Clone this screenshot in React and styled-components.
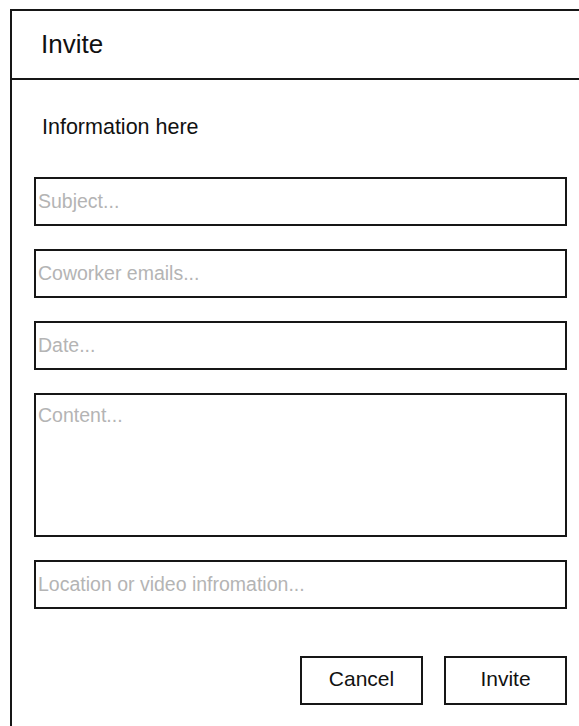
import React from 'react'
import styled, { createGlobalStyle } from 'styled-components'

const GlobalStyle = createGlobalStyle`
    html, body {
        margin: 0;
        padding: 0;
        background: #ffffff;
        overflow: hidden;
    }

    body {
        font-family: "Liberation Sans", Arial, sans-serif;
        color: #111111;
    }
`

// dialog card, opened against the right and bottom edges of the window
const Frame = styled.div`
    margin: 9px 0 0 10px;
    width: calc(100vw - 10px);
    height: calc(100vh - 9px);
    border: 2px solid #161616;
    border-right: none;
    border-bottom: none;
    box-sizing: border-box;
    background: #ffffff;
`

const Header = styled.div`
    height: 69px;
    padding: 0 0 0 29px;
    display: flex;
    align-items: center;
    border-bottom: 2px solid #161616;
    box-sizing: border-box;
    font-size: 26px;
`

const Body = styled.div`
    padding: 35px 0 0 22px;
    width: 555px;
    box-sizing: border-box;
    display: flex;
    flex-direction: column;
`

const Info = styled.div`
    font-size: 21.5px;
    line-height: 24.7px;
    padding-left: 8px;
    margin-bottom: 37px;
`

const Fields = styled.div`
    display: flex;
    flex-direction: column;
    gap: 23px;
`

const fieldStyle = `
    width: 100%;
    box-sizing: border-box;
    border: 2px solid #161616;
    border-radius: 0;
    outline: none;
    background: #ffffff;
    font-family: "Liberation Sans", Arial, sans-serif;
    font-size: 19.5px;
    color: #222222;
    margin: 0;

    &::placeholder {
        color: #b4b4b4;
    }
`

const Field = styled.input`
    ${fieldStyle}
    height: 49px;
    padding: 0 2px;
`

const Area = styled.textarea`
    ${fieldStyle}
    height: ${props => props.$rows}px;
    padding: 9px 2px 0;
    resize: none;
    display: block;
`

const Actions = styled.div`
    margin-top: 47px;
    display: flex;
    justify-content: flex-end;
    gap: 21px;
`

const Button = styled.button`
    width: 123px;
    height: 49px;
    border: 2px solid #161616;
    border-radius: 0;
    background: #ffffff;
    box-sizing: border-box;
    padding: 0 0 3px;
    font-family: "Liberation Sans", Arial, sans-serif;
    font-size: 21px;
    color: #111111;
    cursor: pointer;
`

const App = () => {
    return (
        <>
            <GlobalStyle />
            <Frame>
                <Header>Invite</Header>
                <Body>
                    <Info>Information here</Info>
                    <Fields>
                        <Field placeholder='Subject...' />
                        <Field placeholder='Coworker emails...' />
                        <Field placeholder='Date...' />
                        <Area placeholder='Content...' $rows={144} />
                        <Field placeholder='Location or video infromation...' />
                    </Fields>
                    <Actions>
                        <Button>Cancel</Button>
                        <Button>Invite</Button>
                    </Actions>
                </Body>
            </Frame>
        </>
    )
}

export default App
